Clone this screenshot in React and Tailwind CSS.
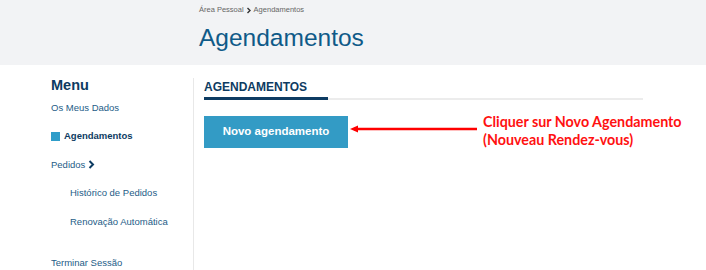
import React from "react";

export default function App() {
  const font = { fontFamily: '"Liberation Sans", Arial, sans-serif' };
  return (
    <div className="w-[706px] h-[270px] bg-white overflow-hidden" style={font}>
      <div className="h-[65px] bg-[#f2f3f5] pl-[199px] pt-[5px]">
        <div className="h-[10px] leading-[10px] text-[7.5px] text-[#666] flex items-center">
          <span>Área Pessoal</span>
          <svg width="6" height="7" viewBox="0 0 6 7" className="mx-[2px]">
            <polyline points="1.5,1 4,3.5 1.5,6" fill="none" stroke="#333" strokeWidth="1.4" />
          </svg>
          <span>Agendamentos</span>
        </div>
        <div className="mt-[9px] h-[28px] leading-[28px] text-[24.5px] text-[#0f5a88]">Agendamentos</div>
      </div>
      <div className="flex">
        <div className="w-[194px] mt-[13px] h-[200px] border-r border-[#e8e8e8] pl-[51px]">
          <div className="h-[15.5px] leading-[14px] text-[14.5px] font-bold text-[#0d3b62]">Menu</div>
          <div className="h-[28.5px] flex items-center text-[9.5px] text-[#245c87]">Os Meus Dados</div>
          <div className="h-[28.5px] flex items-center text-[9.5px] font-bold text-[#0d3b62]">
            <span className="w-[9px] h-[9px] bg-[#2f9dc9] mr-[4px]" />
            Agendamentos
          </div>
          <div className="h-[28.5px] flex items-center text-[9.5px] text-[#245c87]">
            Pedidos
            <svg width="7" height="9" viewBox="0 0 7 9" className="ml-[3px]">
              <polyline points="1.5,1 5,4.5 1.5,8" fill="none" stroke="#0d3b62" strokeWidth="2" />
            </svg>
          </div>
          <div className="h-[28.5px] flex items-center pl-[19px] text-[9.5px] text-[#245c87]">Histórico de Pedidos</div>
          <div className="h-[28.5px] flex items-center pl-[19px] text-[9.5px] text-[#245c87]">Renovação Automática</div>
          <div className="mt-[13px] h-[28.5px] flex items-center text-[9.5px] text-[#245c87]">Terminar Sessão</div>
        </div>
        <div className="pl-[10px] pt-[15px]">
          <div className="w-[439px]">
            <div className="h-[14px] leading-[14px] text-[12px] font-bold text-[#0d3b62]">AGENDAMENTOS</div>
            <div className="mt-[3px] flex items-center">
              <div className="w-[124px] h-[3px] bg-[#0d3b62]" />
              <div className="flex-1 h-[2px] bg-[#ececec]" />
            </div>
          </div>
          <div className="mt-[16px] flex items-start">
            <div className="w-[144px] h-[32px] bg-[#339bc5] flex items-center justify-center text-white font-bold text-[11.5px]">
              Novo agendamento
            </div>
            <svg width="130" height="10" viewBox="0 0 130 10" className="mt-[8px] ml-[1px]">
              <line x1="5" y1="5" x2="128" y2="5" stroke="#ff0000" strokeWidth="2.4" />
              <polygon points="1,5 9,1.5 9,8.5" fill="#ff0000" />
            </svg>
            <div
              className="ml-[4px] -mt-[3px] text-[#ff1111] font-bold text-[14.3px] leading-[17.5px]"
              style={{ fontFamily: 'Lato, "Liberation Sans", sans-serif' }}
            >
              <div>Cliquer sur Novo Agendamento</div>
              <div>(Nouveau Rendez-vous)</div>
            </div>
          </div>
        </div>
      </div>
    </div>
  );
}
